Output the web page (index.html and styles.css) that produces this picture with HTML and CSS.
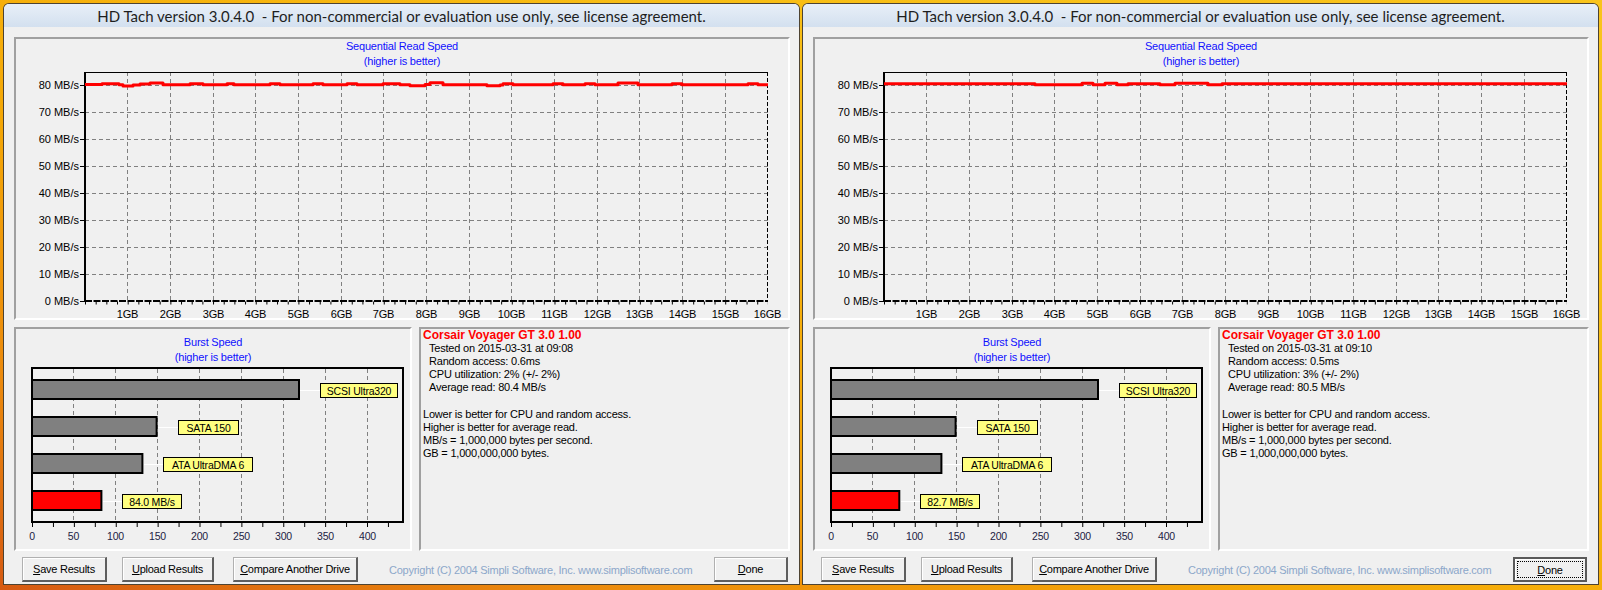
FILE: index.html
```html
<!DOCTYPE html>
<html>
<head>
<meta charset="utf-8">
<link rel="stylesheet" href="styles.css">
</head>
<body>
<div class="desk">
  <div class="win">
    <div class="titlebar">HD Tach version 3.0.4.0  - For non-commercial or evaluation use only, see license agreement.</div>
    <div class="client">
      <div class="panel seq">
        <div class="ctitle">Sequential Read Speed<br>(higher is better)</div>
        <svg class="seqsvg" width="772" height="250" viewBox="0 0 772 250">
          <g class="grid">
            <path d="M69 17.5H752M69 44.5H752M69 71.5H752M69 98.5H752M69 125.5H752M69 152.5H752M69 179.5H752M69 206.5H752"/>
            <path d="M111.5 4V233M154.5 4V233M197.5 4V233M239.5 4V233M282.5 4V233M325.5 4V233M367.5 4V233M410.5 4V233M453.5 4V233M495.5 4V233M538.5 4V233M581.5 4V233M623.5 4V233M666.5 4V233M709.5 4V233"/>
          </g>
          <path class="ytick" d="M64 17.5H69M64 44.5H69M64 71.5H69M64 98.5H69M64 125.5H69M64 152.5H69M64 179.5H69M64 206.5H69M64 233.5H69"/>
          <line class="topb" x1="69" y1="4.5" x2="752" y2="4.5"/>
          <line class="rightb" x1="751.5" y1="4" x2="751.5" y2="233"/>
          <line class="leftax" x1="69" y1="4" x2="69" y2="234"/>
          <line class="botax" x1="69" y1="233" x2="752" y2="233"/>
          <line class="botticks" x1="69" y1="235" x2="752" y2="235"/>
          <path class="redline" d="M69 16.5H86V15.8H103V16.7H107V18H117V17H124V16H134V15H147V16.7H174V15.8H187V16.7H211V15.8H218V16.7H254V15.8H264V16.7H297V15.8H307V16.7H331V15.8H341V16.7H367V15.8H384V16.7H394V17.7H409V16.5H414V14.7H427V16.7H471V17.7H484V17H487V15.8H497V16.7H537V15.8H547V16.7H569V15.8H579V16.7H602V14.9H622V16.7H656V15.8H666V16.7H732V15.8H742V16.7H752"/>
          <g class="ylab">
            <text x="63" y="21">80 MB/s</text><text x="63" y="48">70 MB/s</text><text x="63" y="75">60 MB/s</text><text x="63" y="102">50 MB/s</text><text x="63" y="129">40 MB/s</text><text x="63" y="156">30 MB/s</text><text x="63" y="183">20 MB/s</text><text x="63" y="210">10 MB/s</text><text x="63" y="237">0 MB/s</text>
          </g>
          <g class="xlab">
            <text x="111.5" y="249.5">1GB</text><text x="154.5" y="249.5">2GB</text><text x="197.5" y="249.5">3GB</text><text x="239.5" y="249.5">4GB</text><text x="282.5" y="249.5">5GB</text><text x="325.5" y="249.5">6GB</text><text x="367.5" y="249.5">7GB</text><text x="410.5" y="249.5">8GB</text><text x="453.5" y="249.5">9GB</text><text x="495.5" y="249.5">10GB</text><text x="538.5" y="249.5">11GB</text><text x="581.5" y="249.5">12GB</text><text x="623.5" y="249.5">13GB</text><text x="666.5" y="249.5">14GB</text><text x="709.5" y="249.5">15GB</text><text x="751.5" y="249.5">16GB</text>
          </g>
        </svg>
      </div>
      <div class="lower">
        <div class="panel burst">
          <div class="ctitle">Burst Speed<br>(higher is better)</div>
          <svg class="burstsvg" width="394" height="185" viewBox="0 0 394 185">
            <path class="grid" d="M57.5 5V157M99.5 5V157M141.5 5V157M183.5 5V157M225.5 5V157M267.5 5V157M309.5 5V157M351.5 5V157"/>
            <rect class="plot" x="16" y="4" width="371" height="154"/>
            <line class="bticks" x1="16" y1="160.5" x2="388" y2="160.5"/>
            <rect class="bar" x="16" y="16" width="267" height="19"/>
            <rect class="bar" x="16" y="53" width="124.6" height="19"/>
            <rect class="bar" x="16" y="90" width="110.4" height="19"/>
            <rect class="bar red" x="16" y="127" width="69.4" height="19"/>
            <path class="conn" d="M284 26.5H304M142 63.5H162M128 100.5H147M87 137.5H106"/>
            <rect class="lbox" x="304.5" y="19.5" width="77" height="14"/>
            <rect class="lbox" x="162.5" y="56.5" width="60" height="14"/>
            <rect class="lbox" x="147.5" y="93.5" width="89" height="14"/>
            <rect class="lbox" x="106.5" y="130.5" width="59" height="14"/>
            <g class="ltext">
              <text x="343" y="30.5">SCSI Ultra320</text>
              <text x="192.5" y="67.5">SATA 150</text>
              <text x="192" y="104.5">ATA UltraDMA 6</text>
              <text x="136" y="141.5">84.0 MB/s</text>
            </g>
            <g class="blab">
              <text x="16" y="176">0</text><text x="57.5" y="176">50</text><text x="99.5" y="176">100</text><text x="141.5" y="176">150</text><text x="183.5" y="176">200</text><text x="225.5" y="176">250</text><text x="267.5" y="176">300</text><text x="309.5" y="176">350</text><text x="351.5" y="176">400</text>
            </g>
          </svg>
        </div>
        <div class="panel info">
          <div class="name">Corsair Voyager GT 3.0 1.00</div>
          <div class="ind">Tested on 2015-03-31 at 09:08</div>
          <div class="ind">Random access: 0.6ms</div>
          <div class="ind">CPU utilization: 2% (+/- 2%)</div>
          <div class="ind">Average read: 80.4 MB/s</div>
          <div class="gap"></div>
          <div>Lower is better for CPU and random access.</div>
          <div>Higher is better for average read.</div>
          <div>MB/s = 1,000,000 bytes per second.</div>
          <div>GB = 1,000,000,000 bytes.</div>
        </div>
      </div>
      <div class="btnrow">
        <div class="btn b-save"><u>S</u>ave Results</div>
        <div class="btn b-upload"><u>U</u>pload Results</div>
        <div class="btn b-compare"><u>C</u>ompare Another Drive</div>
        <div class="copy">Copyright (C) 2004 Simpli Software, Inc. www.simplisoftware.com</div>
        <div class="btn b-done"><u>D</u>one</div>
      </div>
    </div>
  </div>

  <div class="win">
    <div class="titlebar">HD Tach version 3.0.4.0  - For non-commercial or evaluation use only, see license agreement.</div>
    <div class="client">
      <div class="panel seq">
        <div class="ctitle">Sequential Read Speed<br>(higher is better)</div>
        <svg class="seqsvg" width="772" height="250" viewBox="0 0 772 250">
          <g class="grid">
            <path d="M69 17.5H752M69 44.5H752M69 71.5H752M69 98.5H752M69 125.5H752M69 152.5H752M69 179.5H752M69 206.5H752"/>
            <path d="M111.5 4V233M154.5 4V233M197.5 4V233M239.5 4V233M282.5 4V233M325.5 4V233M367.5 4V233M410.5 4V233M453.5 4V233M495.5 4V233M538.5 4V233M581.5 4V233M623.5 4V233M666.5 4V233M709.5 4V233"/>
          </g>
          <path class="ytick" d="M64 17.5H69M64 44.5H69M64 71.5H69M64 98.5H69M64 125.5H69M64 152.5H69M64 179.5H69M64 206.5H69M64 233.5H69"/>
          <line class="topb" x1="69" y1="4.5" x2="752" y2="4.5"/>
          <line class="rightb" x1="751.5" y1="4" x2="751.5" y2="233"/>
          <line class="leftax" x1="69" y1="4" x2="69" y2="234"/>
          <line class="botax" x1="69" y1="233" x2="752" y2="233"/>
          <line class="botticks" x1="69" y1="235" x2="752" y2="235"/>
          <path class="redline" d="M69 15.7H220V16.7H267V15.3H278V16.7H290V15.3H302V16.7H313V15.7H345V16.7H360V15.3H393V16.7H407V15.7H752"/>
          <g class="ylab">
            <text x="63" y="21">80 MB/s</text><text x="63" y="48">70 MB/s</text><text x="63" y="75">60 MB/s</text><text x="63" y="102">50 MB/s</text><text x="63" y="129">40 MB/s</text><text x="63" y="156">30 MB/s</text><text x="63" y="183">20 MB/s</text><text x="63" y="210">10 MB/s</text><text x="63" y="237">0 MB/s</text>
          </g>
          <g class="xlab">
            <text x="111.5" y="249.5">1GB</text><text x="154.5" y="249.5">2GB</text><text x="197.5" y="249.5">3GB</text><text x="239.5" y="249.5">4GB</text><text x="282.5" y="249.5">5GB</text><text x="325.5" y="249.5">6GB</text><text x="367.5" y="249.5">7GB</text><text x="410.5" y="249.5">8GB</text><text x="453.5" y="249.5">9GB</text><text x="495.5" y="249.5">10GB</text><text x="538.5" y="249.5">11GB</text><text x="581.5" y="249.5">12GB</text><text x="623.5" y="249.5">13GB</text><text x="666.5" y="249.5">14GB</text><text x="709.5" y="249.5">15GB</text><text x="751.5" y="249.5">16GB</text>
          </g>
        </svg>
      </div>
      <div class="lower">
        <div class="panel burst">
          <div class="ctitle">Burst Speed<br>(higher is better)</div>
          <svg class="burstsvg" width="394" height="185" viewBox="0 0 394 185">
            <path class="grid" d="M57.5 5V157M99.5 5V157M141.5 5V157M183.5 5V157M225.5 5V157M267.5 5V157M309.5 5V157M351.5 5V157"/>
            <rect class="plot" x="16" y="4" width="371" height="154"/>
            <line class="bticks" x1="16" y1="160.5" x2="388" y2="160.5"/>
            <rect class="bar" x="16" y="16" width="267" height="19"/>
            <rect class="bar" x="16" y="53" width="124.6" height="19"/>
            <rect class="bar" x="16" y="90" width="110.4" height="19"/>
            <rect class="bar red" x="16" y="127" width="68.3" height="19"/>
            <path class="conn" d="M284 26.5H304M142 63.5H162M128 100.5H147M86 137.5H105"/>
            <rect class="lbox" x="304.5" y="19.5" width="77" height="14"/>
            <rect class="lbox" x="162.5" y="56.5" width="60" height="14"/>
            <rect class="lbox" x="147.5" y="93.5" width="89" height="14"/>
            <rect class="lbox" x="105.5" y="130.5" width="59" height="14"/>
            <g class="ltext">
              <text x="343" y="30.5">SCSI Ultra320</text>
              <text x="192.5" y="67.5">SATA 150</text>
              <text x="192" y="104.5">ATA UltraDMA 6</text>
              <text x="135" y="141.5">82.7 MB/s</text>
            </g>
            <g class="blab">
              <text x="16" y="176">0</text><text x="57.5" y="176">50</text><text x="99.5" y="176">100</text><text x="141.5" y="176">150</text><text x="183.5" y="176">200</text><text x="225.5" y="176">250</text><text x="267.5" y="176">300</text><text x="309.5" y="176">350</text><text x="351.5" y="176">400</text>
            </g>
          </svg>
        </div>
        <div class="panel info">
          <div class="name">Corsair Voyager GT 3.0 1.00</div>
          <div class="ind">Tested on 2015-03-31 at 09:10</div>
          <div class="ind">Random access: 0.5ms</div>
          <div class="ind">CPU utilization: 3% (+/- 2%)</div>
          <div class="ind">Average read: 80.5 MB/s</div>
          <div class="gap"></div>
          <div>Lower is better for CPU and random access.</div>
          <div>Higher is better for average read.</div>
          <div>MB/s = 1,000,000 bytes per second.</div>
          <div>GB = 1,000,000,000 bytes.</div>
        </div>
      </div>
      <div class="btnrow">
        <div class="btn b-save"><u>S</u>ave Results</div>
        <div class="btn b-upload"><u>U</u>pload Results</div>
        <div class="btn b-compare"><u>C</u>ompare Another Drive</div>
        <div class="copy">Copyright (C) 2004 Simpli Software, Inc. www.simplisoftware.com</div>
        <div class="btn b-done focus"><span class="focusring"><u>D</u>one</span></div>
      </div>
    </div>
  </div>
</div>
</body>
</html>
```

FILE: styles.css
```css
html, body {
  margin: 0;
  padding: 0;
}
body {
  width: 1602px;
  height: 590px;
  overflow: hidden;
  font-family: "Liberation Sans", Arial, sans-serif;
  background: linear-gradient(to top right, #d65a12 0%, #ec8a0c 18%, #f5a806 40%, #f8bd14 70%, #f9c41c 100%);
}
.desk {
  display: flex;
  gap: 2px;
  padding: 3px 0 0 3px;
}
.win {
  width: 797px;
  box-sizing: border-box;
  border: 1px solid rgba(48, 36, 16, 0.85);
  border-radius: 6px 6px 0 0;
  overflow: hidden;
  background: #f0f0f0;
}
.titlebar {
  height: 23px;
  background: linear-gradient(#e8eff8, #d3e0ef);
  font-family: "Lato", "Noto Sans", sans-serif;
  font-size: 15px;
  line-height: 24px;
  text-align: center;
  white-space: pre;
  color: #1e1e1e;
}
.client {
  height: 557px;
  box-sizing: border-box;
  padding: 10px 9px 0 10px;
  display: flex;
  flex-direction: column;
  background: #f0f0f0;
}
.panel {
  box-sizing: border-box;
  border: 2px solid;
  border-color: #a0a0a0 #ffffff #ffffff #a0a0a0;
}
.seq {
  height: 283px;
}
.ctitle {
  color: #1010ff;
  text-align: center;
  font-size: 11px;
  letter-spacing: -0.2px;
  line-height: 14.5px;
}
svg {
  display: block;
  overflow: visible;
}
.grid path, path.grid {
  fill: none;
  stroke: #808080;
  stroke-width: 1;
  stroke-dasharray: 4 3;
}
.ytick {
  stroke: #000;
  stroke-width: 1;
  fill: none;
}
.topb {
  stroke: #000;
  stroke-width: 1;
}
.rightb {
  stroke: #000;
  stroke-width: 1;
  stroke-dasharray: 4 2;
}
.leftax {
  stroke: #000;
  stroke-width: 2;
}
.botax {
  stroke: #000;
  stroke-width: 2;
  stroke-dasharray: 7 1.5;
}
.botticks {
  stroke: #000;
  stroke-width: 3;
  stroke-dasharray: 1 9.67;
}
.redline {
  fill: none;
  stroke: #ff0000;
  stroke-width: 3;
  stroke-linejoin: round;
}
.ylab text {
  font-size: 11px;
  text-anchor: end;
  fill: #000;
}
.xlab text {
  font-size: 11px;
  letter-spacing: -0.2px;
  text-anchor: middle;
  fill: #000;
}
.lower {
  display: flex;
  gap: 7px;
  margin-top: 7px;
  height: 224px;
}
.burst {
  width: 398px;
}
.burst .ctitle {
  padding-top: 6px;
}
.plot {
  fill: none;
  stroke: #000;
  stroke-width: 2;
}
.bticks {
  stroke: #000;
  stroke-width: 5;
  stroke-dasharray: 1 19.9375;
}
.bar {
  fill: #808080;
  stroke: #000;
  stroke-width: 2;
}
.bar.red {
  fill: #ff0000;
}
.conn {
  stroke: #ffffff;
  stroke-width: 1;
  fill: none;
}
.lbox {
  fill: #ffff80;
  stroke: #000;
  stroke-width: 1;
}
.ltext text {
  font-size: 10.5px;
  letter-spacing: -0.2px;
  text-anchor: middle;
  fill: #000;
}
.blab text {
  font-size: 10.5px;
  letter-spacing: -0.2px;
  text-anchor: middle;
  fill: #1c1c44;
}
.info {
  width: 371px;
  padding: 0 0 0 2px;
  font-size: 11px;
  letter-spacing: -0.2px;
  line-height: 13.1px;
  color: #000;
}
.info .name {
  font-weight: bold;
  font-size: 12px;
  letter-spacing: 0;
  color: #ff0000;
}
.info .ind {
  padding-left: 6px;
}
.info .gap {
  height: 13.1px;
}
.btnrow {
  display: flex;
  align-items: center;
  margin-top: 6px;
  height: 25px;
  padding-left: 8px;
}
.btn {
  height: 25px;
  box-sizing: border-box;
  display: flex;
  align-items: center;
  justify-content: center;
  font-size: 11px;
  letter-spacing: -0.25px;
  color: #000;
  background: #f0f0f0;
  border-style: solid;
  border-width: 1px 2px 2px 1px;
  border-color: #b0b0b0 #5e5e5e #5e5e5e #b0b0b0;
  box-shadow: inset 1px 1px 0 #ffffff;
}
.b-save {
  width: 85px;
}
.b-upload {
  width: 92px;
  margin-left: 15px;
}
.b-compare {
  width: 125px;
  margin-left: 19px;
}
.copy {
  margin-left: 31px;
  font-size: 11px;
  letter-spacing: -0.25px;
  color: #8ca7ca;
  white-space: nowrap;
}
.b-done {
  width: 74px;
  margin-left: auto;
  margin-right: 2px;
}
.b-done.focus {
  border-width: 2px;
  border-color: #5a5a5a;
  box-shadow: inset 1px 1px 0 #ffffff;
}
.focusring {
  box-sizing: border-box;
  width: 66px;
  height: 17px;
  border: 1px dotted #000;
  display: flex;
  align-items: center;
  justify-content: center;
}
```
